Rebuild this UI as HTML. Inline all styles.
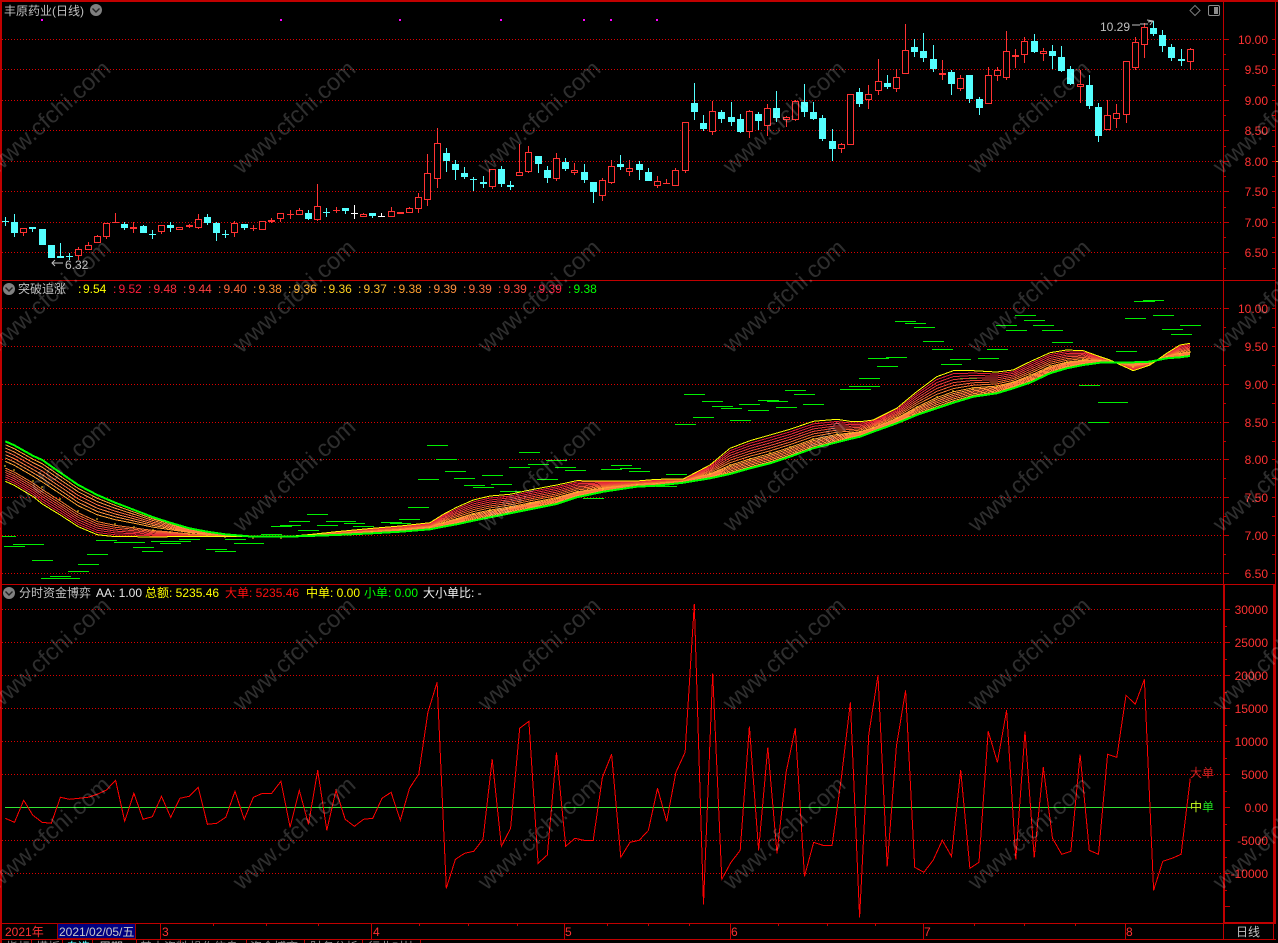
<!DOCTYPE html>
<html lang="zh">
<head>
<meta charset="utf-8">
<title>丰原药业(日线)</title>
<style>
html,body{margin:0;padding:0;background:#000;width:1278px;height:943px;overflow:hidden}
svg{display:block;position:absolute;left:0;top:0}
text{font-family:"Liberation Sans","Noto Sans CJK SC","WenQuanYi Zen Hei",sans-serif;font-size:12px}
.c{shape-rendering:crispEdges}
.ax text{fill:#ff3232;text-anchor:end}
.wm text{font-size:23.5px;fill:#fff;fill-opacity:.18;text-anchor:middle}
.g{fill:#c0c0c0}
</style>
</head>
<body>
<svg id="s" width="1278" height="943" viewBox="0 0 1278 943" xmlns="http://www.w3.org/2000/svg">
<g id="grid" class="c"></g>
<g id="chart"></g>
<g id="frame" class="c"></g>

<!-- magenta markers -->
<g fill="#ff00ff" class="c">
<rect x="41" y="19" width="2" height="2"/><rect x="280" y="19" width="2" height="2"/><rect x="399" y="19" width="2" height="2"/><rect x="500" y="19" width="2" height="2"/><rect x="583" y="19" width="2" height="2"/><rect x="610" y="19" width="2" height="2"/><rect x="656" y="19" width="2" height="2"/>
</g>

<!-- panel 1 titles -->
<text x="4" y="15" class="g" style="font-size:12px">丰原药业(日线)</text>
<g><circle cx="96" cy="10" r="6" fill="#808080"/><path d="M92.5 8.5l3.5 3.5 3.5-3.5" fill="none" stroke="#222" stroke-width="1.4"/></g>
<path d="M1195 5.5l5 5-5 5-5-5z" fill="none" stroke="#7a7a7a"/>
<rect x="1208.5" y="5.5" width="11" height="10" rx="1.5" fill="none" stroke="#8c8c8c"/><rect x="1214" y="7" width="4" height="7" fill="#8c8c8c"/>
<text x="1100" y="31" class="g">10.29</text>
<path d="M1132 25h8M1140 24h8M1148 22l5-1M1147 20l6 1-3 4" fill="none" stroke="#c0c0c0"/>
<path d="M52 263h11M55 260l-3 3 3 3" fill="none" stroke="#c0c0c0"/>
<text x="65" y="269" class="g">6.32</text>

<!-- panel 2 legend -->
<g><circle cx="9" cy="289" r="6" fill="#808080"/><path d="M5.5 287.5l3.5 3.5 3.5-3.5" fill="none" stroke="#222" stroke-width="1.4"/></g>
<text x="18" y="293" class="g">突破追涨</text>
<g>
<text x="78" y="293" fill="#ffff00">:</text><text x="83" y="293" fill="#ffff00">9.54</text>
<text x="113" y="293" fill="#ff1e3c">:</text><text x="118.5" y="293" fill="#ff1e3c">9.52</text>
<text x="148" y="293" fill="#ff2d3c">:</text><text x="153.5" y="293" fill="#ff2d3c">9.48</text>
<text x="183" y="293" fill="#ff4040">:</text><text x="188.5" y="293" fill="#ff4040">9.44</text>
<text x="218" y="293" fill="#ff6a3c">:</text><text x="223.5" y="293" fill="#ff6a3c">9.40</text>
<text x="253" y="293" fill="#ff9030">:</text><text x="258.5" y="293" fill="#ff9030">9.38</text>
<text x="288" y="293" fill="#ffb030">:</text><text x="293.5" y="293" fill="#ffb030">9.36</text>
<text x="323" y="293" fill="#ffd020">:</text><text x="328.5" y="293" fill="#ffd020">9.36</text>
<text x="358" y="293" fill="#ffc030">:</text><text x="363.5" y="293" fill="#ffc030">9.37</text>
<text x="393" y="293" fill="#ffa030">:</text><text x="398.5" y="293" fill="#ffa030">9.38</text>
<text x="428" y="293" fill="#ff9040">:</text><text x="433.5" y="293" fill="#ff9040">9.39</text>
<text x="463" y="293" fill="#ff7040">:</text><text x="468.5" y="293" fill="#ff7040">9.39</text>
<text x="498" y="293" fill="#ff5040">:</text><text x="503.5" y="293" fill="#ff5040">9.39</text>
<text x="533" y="293" fill="#ff2040">:</text><text x="538.5" y="293" fill="#ff2040">9.39</text>
<text x="568" y="293" fill="#00ff00">:</text><text x="573.5" y="293" fill="#00ff00">9.38</text>
</g>

<!-- panel 3 legend -->
<g><circle cx="9" cy="593" r="6" fill="#808080"/><path d="M5.5 591.5l3.5 3.5 3.5-3.5" fill="none" stroke="#222" stroke-width="1.4"/></g>
<text x="19" y="597" class="g">分时资金博弈</text>
<text x="96" y="597" fill="#e8e8e8">AA: 1.00</text>
<text x="145" y="597" fill="#ffff00">总额: 5235.46</text>
<text x="225" y="597" fill="#ff1010">大单: 5235.46</text>
<text x="306" y="597" fill="#ffff00">中单: 0.00</text>
<text x="364" y="597" fill="#00ff00">小单: 0.00</text>
<text x="423" y="597" fill="#f0f0f0">大小单比: -</text>

<!-- line-end labels -->
<text x="1190" y="777" fill="#d02020">大单</text>
<text x="1190" y="811" fill="#20e020"><tspan fill="#c8ff20">中</tspan>单</text>

<!-- right axes -->
<g class="ax">
<text x="1268" y="44">10.00</text><text x="1268" y="74">9.50</text><text x="1268" y="105">9.00</text><text x="1268" y="135">8.50</text><text x="1268" y="166">8.00</text><text x="1268" y="196">7.50</text><text x="1268" y="227">7.00</text><text x="1268" y="257">6.50</text>
<text x="1268" y="313">10.00</text><text x="1268" y="351">9.50</text><text x="1268" y="389">9.00</text><text x="1268" y="427">8.50</text><text x="1268" y="464">8.00</text><text x="1268" y="502">7.50</text><text x="1268" y="540">7.00</text><text x="1268" y="578">6.50</text>
<text x="1268" y="614">30000</text><text x="1268" y="647">25000</text><text x="1268" y="680">20000</text><text x="1268" y="713">15000</text><text x="1268" y="746">10000</text><text x="1268" y="779">5000</text><text x="1268" y="812">0.00</text><text x="1268" y="845">-5000</text><text x="1268" y="878">-10000</text>
</g>

<!-- time axis -->
<text x="5" y="936" fill="#ff3232">2021年</text>
<rect x="57.5" y="923.5" width="78" height="15" fill="#000080" stroke="#a00000" class="c"/>
<text x="59" y="936" fill="#c8c8c8">2021/02/05/五</text>
<text x="162" y="936" fill="#ff3232">3</text>
<text x="373" y="936" fill="#ff3232">4</text>
<text x="565" y="936" fill="#ff3232">5</text>
<text x="731" y="936" fill="#ff3232">6</text>
<text x="924" y="936" fill="#ff3232">7</text>
<text x="1126" y="936" fill="#ff3232">8</text>
<text x="1236" y="936" fill="#c0c0c0">日线</text>

<!-- cut off bottom tabs -->
<text x="6" y="951" fill="#909090">指标</text>
<text x="36" y="951" fill="#909090">模板</text>
<text x="66" y="951" fill="#54ffff">自选</text>
<text x="99" y="951" fill="#c0c0c0">周期</text>
<text x="140" y="951" fill="#909090">基本资料</text>
<text x="190" y="951" fill="#909090">操作信息</text>
<text x="250" y="951" fill="#909090">资金博弈</text>
<text x="310" y="951" fill="#909090">财务分析</text>
<text x="368" y="951" fill="#909090">行业对比</text>

<!-- watermark -->
<g class="wm" id="wm">
<text transform="translate(49 117) rotate(-42)" y="8">www.cfchi.com</text><text transform="translate(294 117) rotate(-42)" y="8">www.cfchi.com</text><text transform="translate(539 117) rotate(-42)" y="8">www.cfchi.com</text><text transform="translate(784 117) rotate(-42)" y="8">www.cfchi.com</text><text transform="translate(1029 117) rotate(-42)" y="8">www.cfchi.com</text><text transform="translate(1274 117) rotate(-42)" y="8">www.cfchi.com</text>
<text transform="translate(49 296) rotate(-42)" y="8">www.cfchi.com</text><text transform="translate(294 296) rotate(-42)" y="8">www.cfchi.com</text><text transform="translate(539 296) rotate(-42)" y="8">www.cfchi.com</text><text transform="translate(784 296) rotate(-42)" y="8">www.cfchi.com</text><text transform="translate(1029 296) rotate(-42)" y="8">www.cfchi.com</text><text transform="translate(1274 296) rotate(-42)" y="8">www.cfchi.com</text>
<text transform="translate(49 475) rotate(-42)" y="8">www.cfchi.com</text><text transform="translate(294 475) rotate(-42)" y="8">www.cfchi.com</text><text transform="translate(539 475) rotate(-42)" y="8">www.cfchi.com</text><text transform="translate(784 475) rotate(-42)" y="8">www.cfchi.com</text><text transform="translate(1029 475) rotate(-42)" y="8">www.cfchi.com</text><text transform="translate(1274 475) rotate(-42)" y="8">www.cfchi.com</text>
<text transform="translate(49 654) rotate(-42)" y="8">www.cfchi.com</text><text transform="translate(294 654) rotate(-42)" y="8">www.cfchi.com</text><text transform="translate(539 654) rotate(-42)" y="8">www.cfchi.com</text><text transform="translate(784 654) rotate(-42)" y="8">www.cfchi.com</text><text transform="translate(1029 654) rotate(-42)" y="8">www.cfchi.com</text><text transform="translate(1274 654) rotate(-42)" y="8">www.cfchi.com</text>
<text transform="translate(49 833) rotate(-42)" y="8">www.cfchi.com</text><text transform="translate(294 833) rotate(-42)" y="8">www.cfchi.com</text><text transform="translate(539 833) rotate(-42)" y="8">www.cfchi.com</text><text transform="translate(784 833) rotate(-42)" y="8">www.cfchi.com</text><text transform="translate(1029 833) rotate(-42)" y="8">www.cfchi.com</text><text transform="translate(1274 833) rotate(-42)" y="8">www.cfchi.com</text>
</g>
</svg>

<script>
(function(){
var NS="http://www.w3.org/2000/svg";
function el(parent,tag,attrs){var e=document.createElementNS(NS,tag);for(var k in attrs)e.setAttribute(k,attrs[k]);parent.appendChild(e);return e;}
var grid=document.getElementById('grid'),chart=document.getElementById('chart'),frame=document.getElementById('frame');
var RED="#ff3232",CY="#54ffff",BORDER="#c00000",DOT="#dc0000";

// dotted grid
[39.5,69.5,100.5,130.5,161.5,191.5,222.5,252.5,308.5,346.5,384.5,422.5,459.5,497.5,535.5,573.5,609.5,642.5,675.5,708.5,741.5,774.5,840.5,873.5].forEach(function(y){
  el(grid,'line',{x1:2,x2:1223,y1:y,y2:y,stroke:DOT,'stroke-width':1,'stroke-dasharray':'1 2'});
});

// candles: colour, body top, body bottom, wick top, wick bottom (3x coordinates)
var C=[
"c,664,667,651,677","c,666,698,643,711","r,685,700,685,707","c,681,686,681,695","c,687,735,687,735","c,735,774,735,774","c,769,773,729,773","c,768,770,760,780","r,748,767,742,780","r,736,749,727,749",
"r,709,728,706,728","r,670,710,670,717","r,667,670,639,670","c,672,683,666,690","r,682,686,667,698","c,678,698,676,698","c,703,705,690,717","r,676,695,676,701","c,675,683,666,695","r,680,689,680,689",
"r,676,680,672,683","r,656,683,642,686","c,652,669,642,674","c,669,698,666,723","c,702,705,690,714","r,670,700,664,711","c,672,683,672,690","r,683,686,675,693","r,664,689,664,689","r,661,667,655,670",
"r,640,658,640,666","r,643,646,630,657","r,631,644,625,644","c,639,657,630,660","r,619,661,552,664","c,637,640,624,651","r,630,634,621,640","c,625,633,625,641","w,640,642,615,656","r,643,650,640,652",
"c,640,647,640,653","w,648,650,639,650","r,634,650,622,650","r,635,643,635,643","r,625,640,622,640","r,592,628,580,638","r,520,601,462,617",
"r,430,536,385,564","c,459,483,445,516","c,492,510,480,540","c,519,531,501,537","c,536,539,532,573","c,546,551,528,564","r,508,560,508,567","c,507,552,498,561","c,555,561,543,570","r,517,527,432,527",
"r,457,515,438,519","c,468,492,468,519","c,510,534,498,549","r,475,537,460,542","c,486,507,474,513","r,511,518,489,525","c,516,540,492,549","c,546,576,546,609","r,541,587,534,603","r,499,549,480,551",
"c,492,501,465,510","r,504,515,480,528","c,492,510,483,540","c,516,543,504,543","r,544,557,528,564","r,549,552,537,552","r,511,557,505,557","r,367,513,367,519","c,309,336,249,360","c,369,387,345,393",
"r,334,395,303,405","c,336,357,330,369","c,351,366,306,378","c,357,396,342,399","r,334,395,331,414","c,342,363,336,390","r,325,377,312,408","c,324,354,273,366","r,352,359,348,381","r,304,359,300,363",
"c,306,336,252,351","c,336,357,306,360","c,354,417,345,423","c,423,447,387,483","r,433,446,430,459","r,283,434,283,434","c,276,312,264,321",
"r,283,301,255,327","r,244,274,177,285","c,249,261,225,267","r,232,266,207,276","r,151,221,72,221","c,141,156,117,171","c,153,174,99,186","c,177,207,135,216","r,220,224,180,240",
"c,216,252,210,285","r,235,266,226,273","c,225,297,225,309","c,297,324,291,345","r,226,311,201,311","r,211,227,201,243","r,154,233,93,240","r,166,170,147,204","r,124,166,111,189","c,123,156,102,159",
"r,154,163,144,183","c,153,168,135,207","c,171,213,138,216","c,208,252,198,255","r,253,260,210,309","c,255,318,225,327","c,321,408,309,426","r,346,389,300,390","r,340,358,312,385","r,184,346,184,369",
"r,127,203,112,209","r,82,136,70,174","c,84,102,63,108","c,105,138,90,156","c,141,174,132,183","c,177,183,147,198","r,148,185,145,209"
];
function X(i){return 5.33+9.186*i;}
var gC=el(chart,'g',{'class':'c'});
C.forEach(function(s,i){
  var p=s.split(','),col=p[0],t=Math.round(+p[1]/3),b=Math.round(+p[2]/3),wt=Math.round(+p[3]/3),wb=Math.round(+p[4]/3);
  var c=Math.floor(X(i));
  var clr=col=='c'?CY:col=='w'?'#ffffff':RED;
  if(wb>wt)el(gC,'rect',{x:c,y:wt,width:1,height:wb-wt,fill:clr});
  if(b-t<=2){
    el(gC,'rect',{x:c-3,y:t,width:7,height:Math.max(1,b-t),fill:clr});
  }else if(col=='r'){
    el(gC,'rect',{x:c-3+.5,y:t+.5,width:6,height:b-t-1,fill:'#000',stroke:clr,'stroke-width':1});
  }else{
    el(gC,'rect',{x:c-3,y:t,width:7,height:b-t,fill:clr});
  }
});

// green dashes panel 2: x1,x2,y in 3x units
var D=[[6,48,769],[12,75,799],[39,132,793],[96,159,841],[123,240,895],[150,213,888],[204,267,874],[234,297,853],[261,324,823],[288,351,781],[342,435,787],[399,462,802],[426,489,814],[453,573,784],[480,543,790],[537,600,778],[618,681,808],[645,708,814],[675,738,778],[702,792,789],[729,765,788],[783,846,763],[813,876,739],[840,903,736],[867,930,724],[894,957,751],[921,984,703],[951,1014,736],[978,1068,724],[1032,1095,730],[1059,1122,739],[1143,1206,727],[1170,1233,730],[1197,1260,718],[1224,1287,682],[1254,1317,598],[1281,1344,496]];
var D2=[[18,81,538],[45,108,574],[72,135,595],[102,165,616],[129,192,622],[156,219,586],[183,246,613],[210,273,634],[237,300,562],[267,330,517],[294,357,553],[321,384,598],[348,411,541],[375,438,562],[405,468,571],[459,522,655],[513,576,568],[543,606,556],[570,633,565],[597,660,574],[678,741,619],[708,771,583],[735,798,433],[762,825,343],[789,852,412],[816,879,364],[846,909,379],[873,936,385],[900,963,421],[927,990,373],[954,1017,391],[984,1047,361],[1011,1074,364],[1038,1101,382],[1065,1128,331],[1092,1155,343],[1119,1182,373],[1230,1323,328],[1257,1350,319]];
var D3=[[27,90,295],[54,117,235],[81,144,259],[108,171,232],[135,198,124],[165,228,130],[192,255,142],[219,282,184],[246,309,208],[273,336,253],[300,363,238],[330,381,295],[384,447,235],[411,474,208],[438,501,136],[468,531,151],[495,558,106],[522,585,121],[549,612,136],[576,639,151],[606,669,187],[687,750,316],[714,777,427],[744,834,367],[798,861,214],[825,888,115],[852,915,64],[879,942,61],[909,972,106],[936,999,148],[963,1026,163],[990,1053,136]];
var gD=el(chart,'g',{'class':'c',fill:'#00ee00'});
function dash(o,off){el(gD,'rect',{x:Math.round((o[0]+off)/3),y:Math.round(280+o[2]/3),width:Math.round((o[1]-o[0])/3),height:1});}
D.forEach(function(o){dash(o,0)});D2.forEach(function(o){dash(o,1290)});D3.forEach(function(o){dash(o,2550)});

// ribbon control points: X(3x), green y, yellow y
var R=[[16,484,604],[43,496,616],[100,528,650],[127,540,672],[181,578,705],[235,615,740],[292,645,764],[346,668,770],[403,690,770],[460,712,771],[511,728,770],[568,745,770],[622,755,770],[676,763,770],[760,770,770],[844,770,771],[925,768,764],[1009,765,755],[1117,760,745],[1201,755,738],[1290,748,728],
[1330,740,703],[1370,733,682],[1420,722,660],[1470,712,648],[1530,700,643],[1590,688,630],[1670,672,615],[1730,652,602],[1810,635,603],[1910,620,603],[1970,617,598],[2050,608,597],[2130,595,555],[2190,582,505],[2250,565,482],[2310,550,465],[2370,530,448],[2440,505,424],[2510,487,418],[2550,477,424],[2580,470,425],
[2620,455,420],[2690,430,385],[2750,405,335],[2810,385,290],[2860,368,272],[2920,350,272],[2990,340,276],[3040,325,270],[3090,308,245],[3150,280,218],[3200,265,210],[3250,255,212],[3300,248,230],[3330,247,240],[3400,247,272],[3450,245,255],[3500,235,220],[3540,232,195],[3570,228,190]];

// upper bundle (fast, near yellow) then lower bundle (near green)
var up=['#e01c38','#e42a3a','#e83a3c','#ec4a38','#f06034','#f47a30'];
var lo=['#ffa030','#ff9040','#ff8040','#ff7040','#ff9040','#ffa030'];
function frac(p,bundle,k){
  var rising=p[0]>800;
  var a=rising?.56:.33,b=rising?.66:.5;
  return bundle==0 ? a*(k+1)/6 : b+(1-b)*k/6;
}
var gR=el(chart,'g',{'class':'c',fill:'none'});
function drawLine(bundle,k,clr){
  var pts=R.map(function(p){var y=p[2]+(p[1]-p[2])*frac(p,bundle,k);return (p[0]/3).toFixed(1)+','+(280+y/3).toFixed(1)}).join(' ');
  el(gR,'polyline',{points:pts,stroke:clr,'stroke-width':1});
}
for(var k=0;k<6;k++)drawLine(0,k,up[k]);
for(k=0;k<6;k++)drawLine(1,k,lo[k]);
// yellow fast line
el(gR,'polyline',{points:R.map(function(p){return (p[0]/3).toFixed(1)+','+(280+p[2]/3).toFixed(1)}).join(' '),stroke:'#ffff00','stroke-width':1});
// sparse dotted mid line
var d='';
R.forEach(function(p){var f=p[0]>800?.61:.41;var y=p[2]+(p[1]-p[2])*f;d+='M'+Math.round(p[0]/3)+' '+Math.round(280+y/3)+'v2';});
el(gR,'path',{d:d,stroke:'#ffd020'});
// green thick
el(gR,'polyline',{points:R.map(function(p){return (p[0]/3).toFixed(1)+','+(280+p[1]/3).toFixed(1)}).join(' '),stroke:'#00ff00','stroke-width':2});

// panel 3 series (3x coordinates, origin 580)
var V=[715,727,661,706,727,730,652,658,655,652,643,630,601,724,640,718,710,649,712,655,649,622,733,730,712,634,718,652,640,640,604,742,631,733,571,751,631,718,739,718,715,655,637,721,625,583,397,
307,925,838,820,814,778,538,799,745,445,424,850,825,517,799,775,781,781,592,523,832,787,781,751,625,724,577,517,72,973,280,898,847,811,439,811,502,820,577,445,889,787,796,796,595,367,1012,
463,286,859,499,331,862,877,841,781,829,571,865,847,454,547,391,838,454,832,562,775,823,814,523,811,823,523,532,346,373,298,931,844,835,823,595];
el(chart,'line',{x1:5,x2:1191,y1:807.5,y2:807.5,stroke:'#33e633','stroke-width':1,'class':'c'});
el(chart,'polyline',{points:V.map(function(v,i){return X(i).toFixed(1)+','+(580+v/3).toFixed(1)}).join(' '),fill:'none',stroke:'#ff0000','stroke-width':1,'class':'c'});

// frame
function rect(x,y,w,h,f){el(frame,'rect',{x:x,y:y,width:w,height:h,fill:f||BORDER});}
rect(0,0,1278,2);          // top
rect(0,0,2,943);           // left
rect(1223,0,1,923);        // axis
rect(1275,0,1,584);        // right
rect(0,280,1276,1);
rect(0,584,1276,1);
rect(0,923,1276,1);
rect(0,939,1276,1);
rect(1223,584,2,340);
rect(1273,584,3,340);
rect(1223,922,53,2);
rect(1223,924,1,16);
rect(1273,924,1,16);
[160,371,564,730,923,1125].forEach(function(x){rect(x,923,1,16);});
[213,266,318,419,468,517,607,648,689,778,827,875,974,1024,1075].forEach(function(x){rect(x,923,1,3);});
[31,62,92,136,180,246,304,362,420].forEach(function(x){rect(x,940,1,3);});
// axis ticks
[39,54,69,85,100,115,130,146,161,176,191,207,222,237,252,268].forEach(function(y,i){rect(1224,y,i%2?2:5,1);rect(1272,y,3,1);});
[308,327,346,365,384,403,422,441,459,478,497,516,535,554,573].forEach(function(y,i){rect(1224,y,i%2?2:5,1);rect(1272,y,3,1);});
[609,626,642,659,675,692,708,725,741,758,774,791,807,824,840,857,873,890,906].forEach(function(y,i){rect(1225,y,i%2?2:5,1);});
rect(1276,161,2,1,'#ffa030');
})();
</script>
</body>
</html>
